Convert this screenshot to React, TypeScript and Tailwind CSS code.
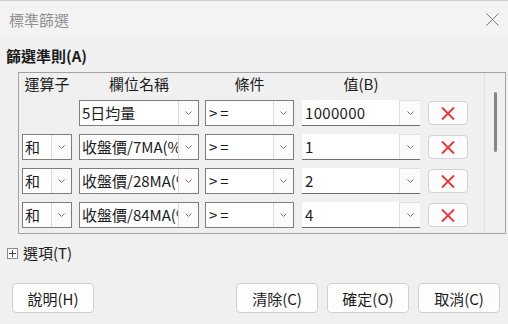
import React from "react";

const Chevron = () => (
  <svg width="9" height="6" viewBox="0 0 9 6" fill="none">
    <path d="M1.5 1.5 L4.5 4.5 L7.5 1.5" stroke="#777777" strokeWidth="1" />
  </svg>
);

const Combo = ({ text, width, wide }: { text: string; width: string; wide?: boolean }) => (
  <div className={`${width} h-[26px] border border-[#7d7d7d] bg-white flex shrink-0`}>
    <div
      className={`flex-1 min-w-0 overflow-hidden whitespace-nowrap pl-[2px] leading-[24px] ${wide ? "tracking-[3px] pl-[3px]" : ""}`}
    >
      {text}
    </div>
    <div className="w-[20px] border-l border-[#dadada] bg-[#fbfbfb] flex items-center justify-center shrink-0">
      <Chevron />
    </div>
  </div>
);

const EditCombo = ({ text }: { text: string }) => (
  <div className="w-[118px] h-[26px] border-b border-[#6f6f6f] bg-white flex shrink-0">
    <div className="flex-1 min-w-0 overflow-hidden whitespace-nowrap pl-[3px] leading-[25px] tracking-[0.3px]">{text}</div>
    <div className="w-[21px] border-l border-t border-[#e0e0e0] bg-[#fbfbfb] flex items-center justify-center shrink-0">
      <Chevron />
    </div>
  </div>
);

const DeleteBtn = () => (
  <div className="w-[40px] h-[24px] rounded-[4px] border border-[#d3d3d3] bg-[#fdfdfd] flex items-center justify-center shrink-0">
    <svg width="14" height="13" viewBox="0 0 14 13" fill="none">
      <path d="M1 0.5 L13 12.5 M13 0.5 L1 12.5" stroke="#e23b3f" strokeWidth="2" />
    </svg>
  </div>
);

const Btn = ({ label }: { label: string }) => (
  <div className="w-[82px] h-[30px] rounded-[4px] border border-[#d0d0d0] bg-[#fdfdfd] flex items-center justify-center leading-none">
    {label}
  </div>
);

const rows = [
  { op: "", field: "5日均量", value: "1000000" },
  { op: "和", field: "收盤價/7MA(%)", value: "1" },
  { op: "和", field: "收盤價/28MA(%)", value: "2" },
  { op: "和", field: "收盤價/84MA(%)", value: "4" },
];

export default function App() {
  return (
    <div className="w-[508px] h-[324px] bg-[#f0f0f0] flex flex-col overflow-hidden text-[15px] text-[#1b1b1b] font-['Noto_Sans_CJK_TC','Noto_Sans',sans-serif]">
      <div className="h-[38px] shrink-0 bg-[#f3f3f3] border-t border-[#c9ccd0] flex items-center justify-between pl-[9px] pr-[9px]">
        <span className="text-[#929292] leading-none">標準篩選</span>
        <svg width="13" height="13" viewBox="0 0 13 13" fill="none">
          <path d="M0.5 0.5 L12.5 12.5 M12.5 0.5 L0.5 12.5" stroke="#7a7a7a" strokeWidth="1" />
        </svg>
      </div>
      <div className="pl-[6px] pt-[8px] font-bold leading-[20px]">篩選準則(A)</div>
      <div className="ml-[18px] mr-[2px] mt-[6px] h-[162px] shrink-0 border border-[#a3a3a3] flex">
        <div className="flex-1 pl-[3px] flex flex-col">
          <div className="h-[21px] flex leading-[21px]">
            <div className="w-[50px] text-center">運算子</div>
            <div className="w-[120px] ml-[7px] text-center">欄位名稱</div>
            <div className="w-[89px] ml-[6px] text-center">條件</div>
            <div className="w-[118px] ml-[8px] text-center">值(B)</div>
          </div>
          <div className="mt-[6px] flex flex-col gap-[8px]">
            {rows.map((r, i) => (
              <div key={i} className="flex items-center h-[26px]">
                {r.op ? <Combo text={r.op} width="w-[50px]" /> : <div className="w-[50px] shrink-0" />}
                <div className="ml-[7px]"><Combo text={r.field} width="w-[120px]" /></div>
                <div className="ml-[6px]"><Combo text=">=" width="w-[89px]" wide /></div>
                <div className="ml-[8px]"><EditCombo text={r.value} /></div>
                <div className="ml-[8px]"><DeleteBtn /></div>
              </div>
            ))}
          </div>
        </div>
        <div className="w-[21px] border-l border-[#e2e2e2] flex justify-center pt-[19px]">
          <div className="w-[3px] h-[60px] rounded-full bg-[#868686]" />
        </div>
      </div>
      <div className="mt-[9px] pl-[7px] flex items-center gap-[5px] leading-[20px]">
        <div className="w-[11px] h-[11px] border border-[#8a8a8a] bg-white flex items-center justify-center">
          <svg width="7" height="7" viewBox="0 0 7 7" fill="none">
            <path d="M0 3.5 H7 M3.5 0 V7" stroke="#444" strokeWidth="1" />
          </svg>
        </div>
        <span>選項(T)</span>
      </div>
      <div className="mt-[20px] pl-[12px] pr-[8px] flex justify-between">
        <Btn label="說明(H)" />
        <div className="flex gap-[9px]">
          <Btn label="清除(C)" />
          <Btn label="確定(O)" />
          <Btn label="取消(C)" />
        </div>
      </div>
    </div>
  );
}
